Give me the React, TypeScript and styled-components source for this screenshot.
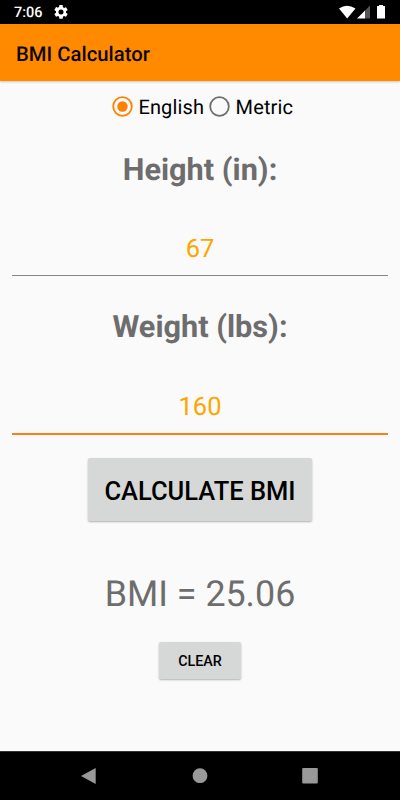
import React from "react";
import styled, { createGlobalStyle } from "styled-components";

const Global = createGlobalStyle`
  *{box-sizing:border-box}
  body{margin:0;background:#fafafa;font-family:Roboto,sans-serif;text-rendering:geometricPrecision}
`;
const Screen = styled.div`width:400px;height:800px;display:flex;flex-direction:column;background:#fafafa;overflow:hidden`;
const Status = styled.div`height:24px;background:#000;color:#fff;display:flex;align-items:center;padding:0 10px 0 14px;font-size:14.5px;font-weight:500;line-height:24px;svg{display:block}`;
const Time = styled.span`width:40px;padding-top:2px`;
const Spacer = styled.div`flex:1`;
const AppBar = styled.header`height:57px;background:#ff8a00;display:flex;align-items:center;padding:3px 16px 0;font-size:20.3px;font-weight:500;color:#0d0700;box-shadow:0 1px 2px rgba(0,0,0,.22)`;
const Main = styled.main`flex:1;display:flex;flex-direction:column;align-items:center;padding:0 12px`;
const Radios = styled.div`display:flex;margin-top:13px;height:26px;align-items:center;font-size:20px;letter-spacing:.13px;color:#000;padding-left:5px`;
const Option = styled.label`display:flex;align-items:center;margin-right:5px;&:last-child{margin-right:0}svg{margin-right:5.5px;display:block;margin-top:-2px}`;
const Label = styled.h2<{ $top: number }>`margin:${p => p.$top}px 0 0;height:36px;line-height:36px;font-size:30.7px;font-weight:700;color:#6d6d6d`;
const Field = styled.div<{ $active?: boolean }>`width:100%;height:${p => p.$active ? 89 : 87}px;padding-top:${p => p.$active ? 43 : 42}px;text-align:center;font-size:25.5px;line-height:36px;color:#ffa500;border-bottom:${p => p.$active ? "2px solid #ff7d1a" : "1px solid #858585"}`;
const Button = styled.button<{ $large?: boolean }>`border:0;border-radius:2px;background:#d6d7d7;color:#000;font-family:inherit;font-weight:500;box-shadow:0 1px 2px rgba(0,0,0,.3);width:${p => p.$large ? 224 : 82}px;height:${p => p.$large ? 63 : 37}px;font-size:${p => p.$large ? 25.5 : 14.3}px;margin-top:${p => p.$large ? 23 : 26}px;padding:${p => p.$large ? 2 : 0}px 0 0;white-space:nowrap;flex:none`;
const Result = styled.div`margin-top:51px;height:44px;line-height:44px;font-size:35.8px;color:#6d6d6d`;
const Nav = styled.nav`height:49px;background:#000;display:flex;justify-content:center;align-items:center;gap:90px;border-top:1px solid #333`;

function Radio({ on }: { on?: boolean }) {
  return <svg width="21" height="21" viewBox="0 0 21 21"><circle cx="10.500" cy="10.500" r="9.300" fill="none" stroke={on ? "#ff8000" : "#6d6d6d"} strokeWidth="1.800" />{on && <circle cx="10.500" cy="10.500" r="5.200" fill="#ff8000" />}</svg>;
}

export default function App() {
  return <><Global /><Screen>
    <Status><Time>7:06</Time>
      <svg width="14" height="14" viewBox="2 2 20 20"><path fill="#fff" d="M19.14 12.94c.04-.3.06-.61.06-.94s-.02-.64-.07-.94l2.03-1.58a.49.49 0 0 0 .12-.61l-1.92-3.32a.49.49 0 0 0-.59-.22l-2.39.96c-.5-.38-1.03-.7-1.62-.94l-.36-2.54A.48.48 0 0 0 13.92 2h-3.84c-.24 0-.43.17-.47.41l-.36 2.54c-.59.24-1.13.57-1.62.94l-2.39-.96a.49.49 0 0 0-.59.22L2.74 8.87a.48.48 0 0 0 .12.61l2.03 1.58a7 7 0 0 0 0 1.88l-2.03 1.58a.49.49 0 0 0-.12.61l1.92 3.32c.12.22.37.29.59.22l2.39-.96c.5.38 1.03.7 1.62.94l.36 2.54c.05.24.24.41.48.41h3.84c.24 0 .44-.17.47-.41l.36-2.54c.59-.24 1.13-.56 1.62-.94l2.39.96c.22.08.47 0 .59-.22l1.92-3.32a.48.48 0 0 0-.12-.61zM12 15.6A3.6 3.6 0 1 1 12 8.400a3.6 3.6 0 0 1 0 7.2z" /></svg>
      <Spacer />
      <svg width="52" height="24" viewBox="338 0 52 24" fill="#fff"><path d="M339 8.500q8-5.500 16.500 0L347.200 18.500zM357 18.500L365 10.500v8zM377 6.500q0-.5.5-.5h1.500V5h4v1h1.500q.5 0 .5.500v12h-8z" /><path d="M365 10.500L370 5.500v13h-5z" fill="#555" /></svg>
    </Status>
    <AppBar>BMI Calculator</AppBar>
    <Main>
      <Radios><Option><Radio on />English</Option><Option><Radio />Metric</Option></Radios>
      <Label $top={33}>Height (in):</Label><Field>67</Field>
      <Label $top={34}>Weight (lbs):</Label><Field $active>160</Field>
      <Button $large>CALCULATE BMI</Button>
      <Result>BMI = 25.06</Result>
      <Button>CLEAR</Button>
    </Main>
    <Nav>
      <svg width="20" height="20"><path d="M15.700 2v16L1 10z" fill="#999" /></svg>
      <svg width="20" height="20"><circle cx="10" cy="9.700" r="7.400" fill="#999" /></svg>
      <svg width="20" height="20"><rect x="2.200" y="2" width="15.600" height="15.600" rx="1" fill="#999" /></svg>
    </Nav>
  </Screen></>;
}
